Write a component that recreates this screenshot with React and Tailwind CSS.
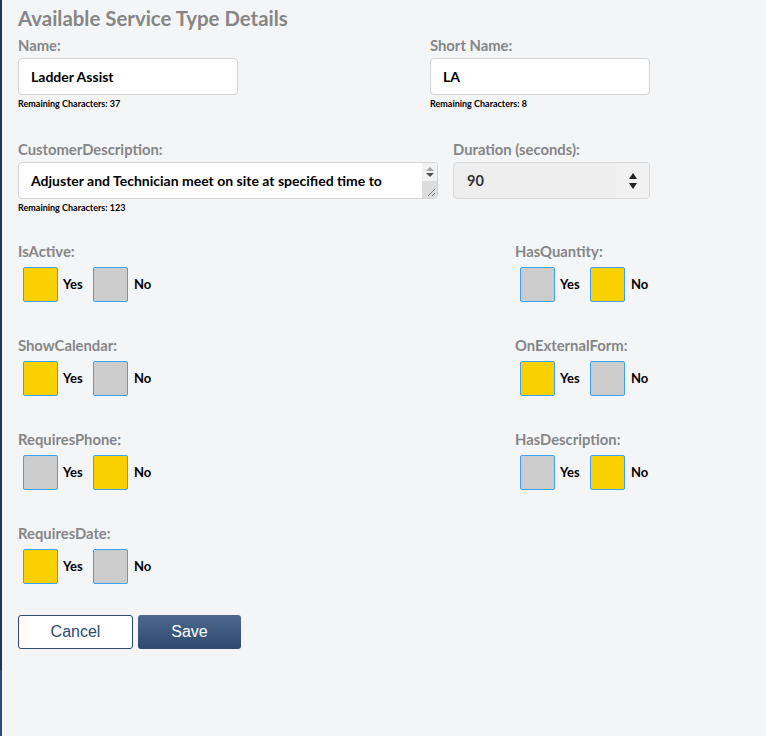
import { useState } from 'react'

const font = { fontFamily: 'Lato, "Open Sans", sans-serif' }

// toggle rows: [left, right]
const toggleRows = [
  [{ label: 'IsActive', value: true }, { label: 'HasQuantity', value: false }],
  [{ label: 'ShowCalendar', value: true }, { label: 'OnExternalForm', value: true }],
  [{ label: 'RequiresPhone', value: false }, { label: 'HasDescription', value: false }],
  [{ label: 'RequiresDate', value: true }, null],
]

function FieldLabel({ children, gap = 'mb-[4px]' }) {
  return <div className={`text-[14.8px] font-bold text-[#868686] leading-[18px] ${gap}`}>{children}</div>
}

function Remaining({ count }) {
  return <div className="text-[9px] font-bold text-black leading-[12px] mt-[3px]">Remaining Characters: {count}</div>
}

function Box({ on, onClick }) {
  return (
    <button
      type="button"
      onClick={onClick}
      className={`w-[35px] h-[35px] border border-[#3aa3f5] rounded-[2px] ${on ? 'bg-[#f9d000]' : 'bg-[#cccccc]'}`}
    />
  )
}

function YesNo({ label, value }) {
  const [val, setVal] = useState(value)
  return (
    <div>
      <FieldLabel gap="mb-[7px]">{label}:</FieldLabel>
      <div className="flex items-center">
        <div className="w-[75px] flex items-center pl-[5px]">
          <Box on={val} onClick={() => setVal(true)} />
          <span className="ml-[5px] text-[13px] font-bold text-black">Yes</span>
        </div>
        <div className="flex items-center">
          <Box on={!val} onClick={() => setVal(false)} />
          <span className="ml-[6px] text-[13px] font-bold text-black">No</span>
        </div>
      </div>
    </div>
  )
}

export default function App() {
  return (
    <div className="min-h-[736px] bg-[#f4f5f7] flex" style={font}>
      <div className="w-[2px] flex flex-col shrink-0">
        <div className="h-[670px] bg-[#1e3553]" />
        <div className="flex-1 bg-[#2d4b75]" />
      </div>
      <div className="pl-[16px] w-[648px]">
        <h1 className="text-[20.4px] font-bold text-[#868686] leading-[24px] pt-[6px] mb-[6px]">
          Available Service Type Details
        </h1>

        {/* name / short name */}
        <div className="flex justify-between">
          <div>
            <FieldLabel>Name:</FieldLabel>
            <div className="w-[220px] h-[37px] bg-white border border-[#d4d4d4] rounded-[4px] flex items-center px-[12px] text-[14px] font-bold text-black">
              Ladder Assist
            </div>
            <Remaining count={37} />
          </div>
          <div className="w-[220px]">
            <FieldLabel>Short Name:</FieldLabel>
            <div className="w-[220px] h-[37px] bg-white border border-[#d4d4d4] rounded-[4px] flex items-center px-[12px] text-[14px] font-bold text-black">
              LA
            </div>
            <Remaining count={8} />
          </div>
        </div>

        {/* description / duration */}
        <div className="flex justify-between mt-[30px]">
          <div>
            <FieldLabel>CustomerDescription:</FieldLabel>
            <div className="w-[420px] h-[37px] bg-white border border-[#d4d4d4] rounded-[4px] flex overflow-hidden">
              <div className="flex-1 flex items-center px-[12px] text-[14px] font-bold text-black whitespace-nowrap overflow-hidden">
                Adjuster and Technician meet on site at specified time to
              </div>
              <div className="w-[15px] flex flex-col bg-[#f1f1f1]">
                <div className="h-[18px] flex flex-col items-center justify-center gap-[2px]">
                  <div className="w-0 h-0 border-x-[4px] border-x-transparent border-b-[4px] border-b-[#a3a3a3]" />
                  <div className="w-0 h-0 border-x-[4px] border-x-transparent border-t-[4px] border-t-[#505050]" />
                </div>
                <div className="flex-1 bg-[#dcdcdc] relative">
                  <svg className="absolute right-[1px] bottom-[1px]" width="10" height="10" viewBox="0 0 10 10">
                    <path d="M9 2 L2 9 M9 6 L6 9" stroke="#777" strokeWidth="1" />
                  </svg>
                </div>
              </div>
            </div>
            <Remaining count={123} />
          </div>
          <div className="w-[197px]">
            <FieldLabel>Duration (seconds):</FieldLabel>
            <div className="h-[37px] bg-[#eeeeee] border border-[#dadada] rounded-[4px] flex overflow-hidden">
              <div className="flex-1 flex items-center px-[13px] text-[14.5px] font-bold text-[#333]">90</div>
              <div className="w-[33px] bg-[#f1f1f1] flex flex-col items-center justify-center gap-[4px]">
                <div className="w-0 h-0 border-x-[4.5px] border-x-transparent border-b-[6px] border-b-[#222]" />
                <div className="w-0 h-0 border-x-[4.5px] border-x-transparent border-t-[6px] border-t-[#222]" />
              </div>
            </div>
          </div>
        </div>

        {/* yes / no toggles */}
        <div className="mt-[28px] flex flex-col gap-[34px]">
          {toggleRows.map(([left, right]) => (
            <div key={left.label} className="flex">
              <YesNo {...left} />
              {right && (
                <div className="ml-auto w-[135px]">
                  <YesNo {...right} />
                </div>
              )}
            </div>
          ))}
        </div>

        <div className="flex gap-[5px] mt-[31px]">
          <button
            type="button"
            className="w-[115px] h-[34px] bg-white border border-[#2f4a6f] rounded-[3px] text-[16px] text-[#2f4a6f]"
            style={{ fontFamily: '"Liberation Sans", Arial, sans-serif' }}
          >
            Cancel
          </button>
          <button
            type="button"
            className="w-[103px] h-[34px] rounded-[3px] bg-gradient-to-b from-[#4e6890] to-[#2e4a70] text-[16px] text-white"
            style={{ fontFamily: '"Liberation Sans", Arial, sans-serif' }}
          >
            Save
          </button>
        </div>
      </div>
    </div>
  )
}
